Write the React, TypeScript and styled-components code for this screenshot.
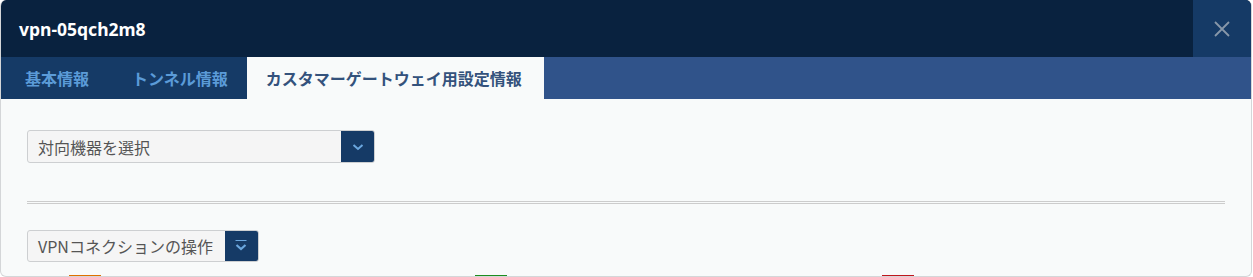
import styled, {createGlobalStyle} from "styled-components";

const GlobalStyle = createGlobalStyle`
  html, body {
    margin: 0;
    padding: 0;
    background: #ffffff;
  }
  body {
    font-family: "Noto Sans", "Noto Sans CJK JP", sans-serif;
  }
`;

const Modal = styled.div`
  position: relative;
  box-sizing: border-box;
  width: 1252px;
  height: 277px;
  border: 1px solid #d4d6d8;
  border-top: none;
  border-radius: 6px;
  overflow: hidden;
  display: flex;
  flex-direction: column;
  background: #f8fafa;
`;

const Header = styled.div`
  display: flex;
  align-items: stretch;
  height: 57px;
  background: #09223f;
`;

const Title = styled.h1`
  flex: 1;
  margin: 0;
  padding-left: 18px;
  display: flex;
  align-items: center;
  color: #ffffff;
  font-size: 17.5px;
  font-weight: 700;
  font-family: "Noto Sans", "Noto Sans CJK JP", sans-serif;
`;

const CloseButton = styled.button`
  width: 58px;
  border: none;
  padding: 0;
  background: #153a66;
  display: flex;
  align-items: center;
  justify-content: center;
  cursor: pointer;
`;

const TabBar = styled.div`
  display: flex;
  height: 42px;
  background: #30538a;
`;

const Tab = styled.div<{ $active?: boolean }>`
  display: flex;
  align-items: center;
  padding: 0 19px;
  font-size: 16px;
  font-weight: 700;
  font-family: "Noto Sans CJK JP", sans-serif;
  background: ${p => (p.$active ? "#f8fafa" : "#153a66")};
  color: ${p => (p.$active ? "#34527c" : "#5b9bd8")};
  cursor: pointer;

  &:first-child {
    padding: 0 24px;
  }

  &:last-child {
    padding: 0 22px 0 19px;
  }
`;

const Body = styled.div`
  flex: 1;
  padding: 31px 26px 0;
  display: flex;
  flex-direction: column;
  align-items: flex-start;
`;

const Select = styled.div<{ $width?: number; $height: number }>`
  box-sizing: border-box;
  display: flex;
  align-items: stretch;
  height: ${p => p.$height}px;
  ${p => (p.$width ? `width: ${p.$width}px;` : "")}
  background: #f5f5f5;
  border: 1px solid #cdcfd1;
  border-radius: 3px;
  overflow: hidden;
`;

const SelectLabel = styled.span`
  flex: 1;
  display: flex;
  align-items: center;
  padding: 0 12px 0 10px;
  font-size: 16px;
  color: #555555;
  font-family: "Noto Sans CJK JP", sans-serif;
  white-space: nowrap;
`;

const SelectButton = styled.span`
  width: 33px;
  background: #153a66;
  display: flex;
  align-items: center;
  justify-content: center;
`;

const Divider = styled.div`
  align-self: stretch;
  margin: 38px 0 26px;
  height: 1px;
  border-top: 1px solid #cccccc;
  border-bottom: 1px solid #cccccc;
`;

const Tick = styled.span<{ $left: number; $color: string }>`
  position: absolute;
  bottom: -1px;
  left: ${p => p.$left}px;
  width: 32px;
  height: 2px;
  background: ${p => p.$color};
`;

const CloseIcon = () => (
  <svg width="18" height="18" viewBox="0 0 18 18">
    <path d="M2 2 L16 16 M16 2 L2 16" stroke="#8797a9" strokeWidth="1.8" />
  </svg>
);

const Chevron = () => (
  <svg width="12" height="10" viewBox="0 0 12 10">
    <path d="M1.5 3 L6 7 L10.5 3" stroke="#6aa6de" strokeWidth="2" fill="none" />
  </svg>
);

const BarChevron = () => (
  <svg width="12" height="14" viewBox="0 0 12 14">
    <path d="M0.5 1.5 H11.5" stroke="#6aa6de" strokeWidth="1.2" />
    <path d="M1.5 6 L6 10 L10.5 6" stroke="#6aa6de" strokeWidth="2.2" fill="none" />
  </svg>
);

export default function App() {
  return (
    <>
      <GlobalStyle />
      <Modal>
        <Header>
          <Title>vpn-05qch2m8</Title>
          <CloseButton aria-label="close"><CloseIcon /></CloseButton>
        </Header>
        <TabBar>
          <Tab>基本情報</Tab>
          <Tab>トンネル情報</Tab>
          <Tab $active>カスタマーゲートウェイ用設定情報</Tab>
        </TabBar>
        <Body>
          <Select $width={348} $height={33}>
            <SelectLabel>対向機器を選択</SelectLabel>
            <SelectButton><Chevron /></SelectButton>
          </Select>
          <Divider />
          <Select $height={32}>
            <SelectLabel>VPNコネクションの操作</SelectLabel>
            <SelectButton><BarChevron /></SelectButton>
          </Select>
        </Body>
        <Tick $left={68} $color="#e07000" />
        <Tick $left={474} $color="#1e8c1e" />
        <Tick $left={881} $color="#c0161c" />
      </Modal>
    </>
  );
}
